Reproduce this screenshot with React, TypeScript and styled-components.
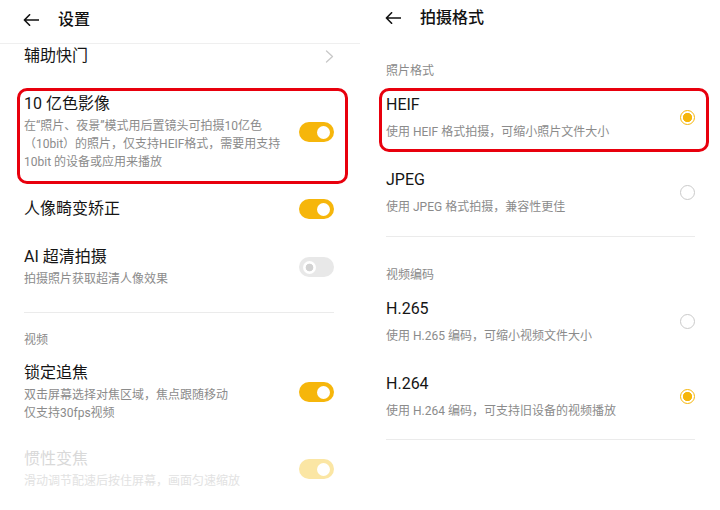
import React from "react";
import styled, { createGlobalStyle, css } from "styled-components";

const YELLOW = "#f6b60b";
const RED = "#e8000d";

const GlobalStyle = createGlobalStyle`
  html, body {
    margin: 0;
    padding: 0;
    background: #ffffff;
  }
  body {
    font-family: Roboto, "Noto Sans CJK SC", sans-serif;
    color: #151515;
  }
`;

const Screen = styled.div`
  width: 720px;
  height: 510px;
  display: flex;
  overflow: hidden;
  background: #ffffff;
`;

const Panel = styled.section`
  width: 360px;
  height: 510px;
  display: flex;
  flex-direction: column;
  overflow: hidden;
`;

const Header = styled.header<{ $top: number; $left: number; $divided?: boolean }>`
  flex-shrink: 0;
  height: 24px;
  display: flex;
  align-items: center;
  gap: 19px;
  padding: ${(p) => p.$top}px 0 ${(p) => (p.$divided ? 11 : 0)}px ${(p) => p.$left}px;
  border-bottom: ${(p) => (p.$divided ? "1px solid #efefef" : "none")};
  background: #ffffff;
`;

const Title = styled.h1`
  margin: 0;
  font-size: 16px;
  line-height: 24px;
  font-weight: 500;
  color: #111111;
`;

const Viewport = styled.div`
  flex: 1;
  overflow: hidden;
`;

const List = styled.div<{ $offset: number; $left: number; $right: number }>`
  margin-top: ${(p) => p.$offset}px;
  padding: 0 ${(p) => p.$right}px 0 ${(p) => p.$left}px;
`;

const highlightBox = css`
  border: 3px solid ${RED};
  border-radius: 10px;
  margin-left: -7px;
  margin-right: -14px;
  padding-left: 4px;
  padding-right: 11px;
`;

const NavRow = styled.div`
  display: flex;
  align-items: center;
  justify-content: space-between;
  padding: 13px 0;
`;

const SwitchRow = styled.div<{ $highlight?: boolean }>`
  display: flex;
  align-items: center;
  justify-content: space-between;
  gap: 16px;
  padding: 13px 0;
  ${(p) =>
    p.$highlight &&
    css`
      ${highlightBox}
      margin-top: 8px;
      margin-bottom: 1px;
      padding-top: 2px;
      padding-bottom: 10px;
    `}
`;

const RadioRow = styled.div<{ $highlight?: boolean }>`
  display: flex;
  align-items: center;
  justify-content: space-between;
  gap: 16px;
  padding: 14px 0;
  ${(p) =>
    p.$highlight &&
    css`
      ${highlightBox}
      margin-top: 8px;
      margin-bottom: 3px;
      padding-top: 3px;
      padding-bottom: 8px;
    `}
`;

const RowText = styled.div`
  display: flex;
  flex-direction: column;
  min-width: 0;
`;

const ItemTitle = styled.div<{ $disabled?: boolean }>`
  font-size: 16px;
  line-height: 22px;
  white-space: nowrap;
  color: ${(p) => (p.$disabled ? "#d9d9d9" : "#151515")};
`;

const Desc = styled.div<{ $top: number; $disabled?: boolean }>`
  margin-top: ${(p) => p.$top}px;
  font-size: 12px;
  line-height: 18px;
  white-space: nowrap;
  color: ${(p) => (p.$disabled ? "#e2e2e2" : "#8b8b8b")};
`;

const SectionLabel = styled.div<{ $top: number }>`
  padding-top: ${(p) => p.$top}px;
  font-size: 12px;
  line-height: 18px;
  color: #8a8a8a;
`;

const Divider = styled.div<{ $top: number }>`
  margin-top: ${(p) => p.$top}px;
  height: 1px;
  background: #ebebeb;
`;

const Toggle = styled.span<{ $on: boolean; $faded?: boolean }>`
  flex-shrink: 0;
  width: 35px;
  height: 20px;
  box-sizing: border-box;
  border-radius: 10px;
  padding: 0 4px;
  display: flex;
  align-items: center;
  justify-content: ${(p) => (p.$on ? "flex-end" : "flex-start")};
  background: ${(p) => (p.$faded ? "#fbe6a4" : p.$on ? YELLOW : "#e8e8e8")};

  &::after {
    content: "";
    width: 13px;
    height: 13px;
    border-radius: 50%;
    background: ${(p) =>
      p.$on ? "#ffffff" : "radial-gradient(circle, #d2d2d2 0 3.5px, #ffffff 4.2px)"};
  }
`;

const Radio = styled.span<{ $checked: boolean }>`
  flex-shrink: 0;
  width: 15px;
  height: 15px;
  box-sizing: border-box;
  border-radius: 50%;
  border: 1.5px solid ${(p) => (p.$checked ? YELLOW : "#cacaca")};
  background: ${(p) =>
    p.$checked ? `radial-gradient(circle, ${YELLOW} 0 4.3px, #ffffff 5px)` : "#ffffff"};
`;

function BackArrow() {
  return (
    <svg width="16" height="12" viewBox="0 0 16 12" fill="none">
      <path d="M15.5 6H1.4M6.6 0.8L1.4 6l5.2 5.2" stroke="#111" strokeWidth="1.6" strokeLinecap="round" strokeLinejoin="round" />
    </svg>
  );
}

function Chevron() {
  return (
    <svg width="9" height="13" viewBox="0 0 9 13" fill="none">
      <path d="M1.5 1l6 5.5-6 5.5" stroke="#c8c8c8" strokeWidth="1.3" strokeLinecap="round" strokeLinejoin="round" />
    </svg>
  );
}

function CameraSettings() {
  return (
    <Panel>
      <Header $top={8} $left={23} $divided>
        <BackArrow />
        <Title>设置</Title>
      </Header>
      <Viewport>
        <List $offset={-12} $left={24} $right={26}>
          <NavRow>
            <ItemTitle>辅助快门</ItemTitle>
            <Chevron />
          </NavRow>
          <SwitchRow $highlight>
            <RowText>
              <ItemTitle>10 亿色影像</ItemTitle>
              <Desc $top={2}>
                在“照片、夜景”模式用后置镜头可拍摄10亿色
                <br />
                （10bit）的照片，仅支持HEIF格式，需要用支持
                <br />
                10bit 的设备或应用来播放
              </Desc>
            </RowText>
            <Toggle $on />
          </SwitchRow>
          <SwitchRow>
            <ItemTitle>人像畸变矫正</ItemTitle>
            <Toggle $on />
          </SwitchRow>
          <SwitchRow>
            <RowText>
              <ItemTitle>AI 超清拍摄</ItemTitle>
              <Desc $top={2}>拍摄照片获取超清人像效果</Desc>
            </RowText>
            <Toggle $on={false} />
          </SwitchRow>
          <Divider $top={11} />
          <SectionLabel $top={18}>视频</SectionLabel>
          <SwitchRow>
            <RowText>
              <ItemTitle>锁定追焦</ItemTitle>
              <Desc $top={2}>
                双击屏幕选择对焦区域，焦点跟随移动
                <br />
                仅支持30fps视频
              </Desc>
            </RowText>
            <Toggle $on />
          </SwitchRow>
          <SwitchRow>
            <RowText>
              <ItemTitle $disabled>惯性变焦</ItemTitle>
              <Desc $top={2} $disabled>
                滑动调节配速后按住屏幕，画面匀速缩放
              </Desc>
            </RowText>
            <Toggle $on $faded />
          </SwitchRow>
        </List>
      </Viewport>
    </Panel>
  );
}

const formats = [
  { section: "照片格式", items: [
    { name: "HEIF", desc: "使用 HEIF 格式拍摄，可缩小照片文件大小", checked: true, highlight: true },
    { name: "JPEG", desc: "使用 JPEG 格式拍摄，兼容性更佳", checked: false, highlight: false },
  ] },
  { section: "视频编码", items: [
    { name: "H.265", desc: "使用 H.265 编码，可缩小视频文件大小", checked: false, highlight: false },
    { name: "H.264", desc: "使用 H.264 编码，可支持旧设备的视频播放", checked: true, highlight: false },
  ] },
];

function FormatSettings() {
  return (
    <Panel>
      <Header $top={6} $left={25}>
        <BackArrow />
        <Title>拍摄格式</Title>
      </Header>
      <Viewport>
        <List $offset={0} $left={26} $right={25}>
          {formats.map((group, gi) => (
            <React.Fragment key={group.section}>
              <SectionLabel $top={gi === 0 ? 32 : 29}>{group.section}</SectionLabel>
              {group.items.map((item) => (
                <RadioRow key={item.name} $highlight={item.highlight}>
                  <RowText>
                    <ItemTitle>{item.name}</ItemTitle>
                    <Desc $top={7}>{item.desc}</Desc>
                  </RowText>
                  <Radio $checked={item.checked} />
                </RadioRow>
              ))}
              <Divider $top={gi === 0 ? 6 : 5} />
            </React.Fragment>
          ))}
        </List>
      </Viewport>
    </Panel>
  );
}

export default function App() {
  return (
    <>
      <GlobalStyle />
      <Screen>
        <CameraSettings />
        <FormatSettings />
      </Screen>
    </>
  );
}
